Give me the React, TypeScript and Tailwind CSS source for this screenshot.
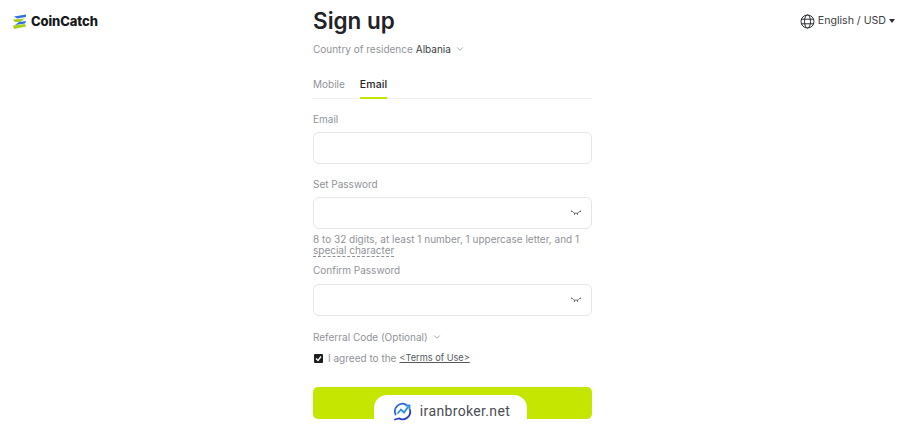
import { ChevronDown } from "lucide-react";

function Logo() {
  return (
    <div className="flex items-center gap-[4px]">
      <svg width="15" height="17" viewBox="0 0 15 17" fill="none">
        <path d="M2 3.5 L14 1.5 L14 4 L5 5.5 Z" fill="#2f6fe0" />
        <path d="M1 6.5 L13 5.5 L8 9 L3 9 Z" fill="#a6d018" />
        <path d="M7 9 L14 8 L13 10.5 L3 12 Z" fill="#2f6fe0" />
        <path d="M1 12.5 L13 11 L14 13.5 L2 16 Z" fill="#a6d018" />
      </svg>
      <span className="text-[13px] font-extrabold text-[#16181c] tracking-[-0.1px] leading-none">CoinCatch</span>
    </div>
  );
}

function EyeClosed() {
  return (
    <svg width="10" height="6" viewBox="0 0 10 6" fill="none" stroke="#6f7378" strokeWidth="1">
      <path d="M1 1 C2.5 4 7.5 4 9 1" />
      <path d="M0.5 0.5 V2 M9.5 0.5 V2 M3.5 3 V5 M6.5 3 V5" />
    </svg>
  );
}

function PasswordInput() {
  return (
    <div className="h-[32px] border border-[#e4e6e8] rounded-[6px] flex items-center justify-end pr-[10px]">
      <EyeClosed />
    </div>
  );
}

export default function App() {
  return (
    <div className="relative h-[428px] w-[900px] overflow-hidden bg-white font-['Inter','Liberation_Sans',sans-serif] grid grid-cols-[313px_279px_1fr]">
      {/* Logo */}
      <div className="pl-[12px] pt-[13px]">
        <Logo />
      </div>

      {/* Form */}
      <div className="flex flex-col">
        <h1 className="mt-[6px] text-[22.5px] leading-[30px] font-semibold text-[#212327]">Sign up</h1>

        <div className="mt-[5px] flex items-center h-[16px] text-[10px] text-[#8f9398]">
          <span>Country of residence</span>
          <span className="ml-[3px] text-[#3a3d42]">Albania</span>
          <ChevronDown size={10} className="ml-[4px] text-[#8f9398]" />
        </div>

        {/* Tabs */}
        <div className="mt-[19px] flex gap-[15px] border-b border-[#eeeff0] h-[23px] text-[10px]">
          <span className="pt-[1px] text-[#8f9398]">Mobile</span>
          <span className="pt-[1px] h-[23px] border-b-[2px] border-[#c5e600] font-medium text-[#212327] text-[10.5px] tracking-[0.1px]">Email</span>
        </div>

        <label className="mt-[12px] h-[16px] leading-[16px] text-[10px] text-[#8f9398]">Email</label>
        <div className="mt-[5px] h-[32px] border border-[#e4e6e8] rounded-[6px]" />

        <label className="mt-[12px] h-[16px] leading-[16px] text-[10px] text-[#8f9398]">Set Password</label>
        <div className="mt-[5px]">
          <PasswordInput />
        </div>

        <p className="mt-[5px] text-[10px] leading-[11px] text-[#8f9398]">
          8 to 32 digits, at least 1 number, 1 uppercase letter, and 1{" "}
          <span className="inline-block leading-[11px] border-b border-dashed border-[#8f9398]">special character</span>
        </p>

        <label className="mt-[5px] h-[16px] leading-[16px] text-[10px] text-[#8f9398]">Confirm Password</label>
        <div className="mt-[6px]">
          <PasswordInput />
        </div>

        <div className="mt-[13px] flex items-center h-[16px] text-[10px] text-[#8f9398]">
          <span>Referral Code (Optional)</span>
          <ChevronDown size={10} className="ml-[4px]" />
        </div>

        <div className="mt-[5px] flex items-center h-[16px] text-[10px] text-[#8f9398]">
          <span className="flex items-center justify-center w-[9px] h-[9px] ml-[1px] bg-[#1b1d20] rounded-[1px]">
            <svg width="7" height="7" viewBox="0 0 7 7" fill="none" stroke="#fff" strokeWidth="1.3">
              <path d="M1 3.5 L3 5.5 L6 1.5" />
            </svg>
          </span>
          <span className="ml-[5px]">I agreed to the</span>
          <span className="ml-[3px] text-[9.2px] text-[#55595e] underline">&lt;Terms of Use&gt;</span>
        </div>

        <div className="mt-[21px] h-[32px] bg-[#c5e600] rounded-[5px]" />
      </div>

      {/* Language */}
      <div className="flex justify-end pr-[5px] pt-[13px]">
        <div className="flex items-center h-[16px] text-[10.6px] text-[#3a3d42]">
          <svg width="15" height="15" viewBox="0 0 15 15" fill="none" stroke="#2b2e32" strokeWidth="1">
            <circle cx="7.5" cy="7.5" r="6.5" />
            <ellipse cx="7.5" cy="7.5" rx="3" ry="6.5" />
            <path d="M1 5.2 H14 M1 9.8 H14" />
          </svg>
          <span className="ml-[3px]">English / USD</span>
          <svg width="6" height="4" viewBox="0 0 6 4" className="ml-[3px]" fill="#2b2e32">
            <path d="M0 0 H6 L3 4 Z" />
          </svg>
        </div>
      </div>

      {/* iranbroker badge */}
      <div className="absolute left-[374px] top-[395px] w-[153px] h-[33px] bg-white rounded-t-[13px] flex items-start justify-center pt-[7px] pl-[2px] gap-[8px]">
        <svg width="19" height="19" viewBox="0 0 19 19" fill="none" strokeWidth="1.8" strokeLinecap="round">
          <path d="M13 2.6 A7.6 7.6 0 0 0 2.6 12.5" stroke="#2f63d8" />
          <path d="M17 8 A7.6 7.6 0 0 1 6 16.4 L2 17.5" stroke="#2f3fc8" />
          <path d="M5 11 L8 7.5 L11 10.5 L15 5" stroke="#2f8fe0" />
          <path d="M13 3.5 H16.5 V7" stroke="#2f8fe0" />
        </svg>
        <span className="font-['Roboto',sans-serif] text-[14px] leading-[19px] tracking-[0.35px] text-[#4a4d52]">iranbroker.net</span>
      </div>
    </div>
  );
}
